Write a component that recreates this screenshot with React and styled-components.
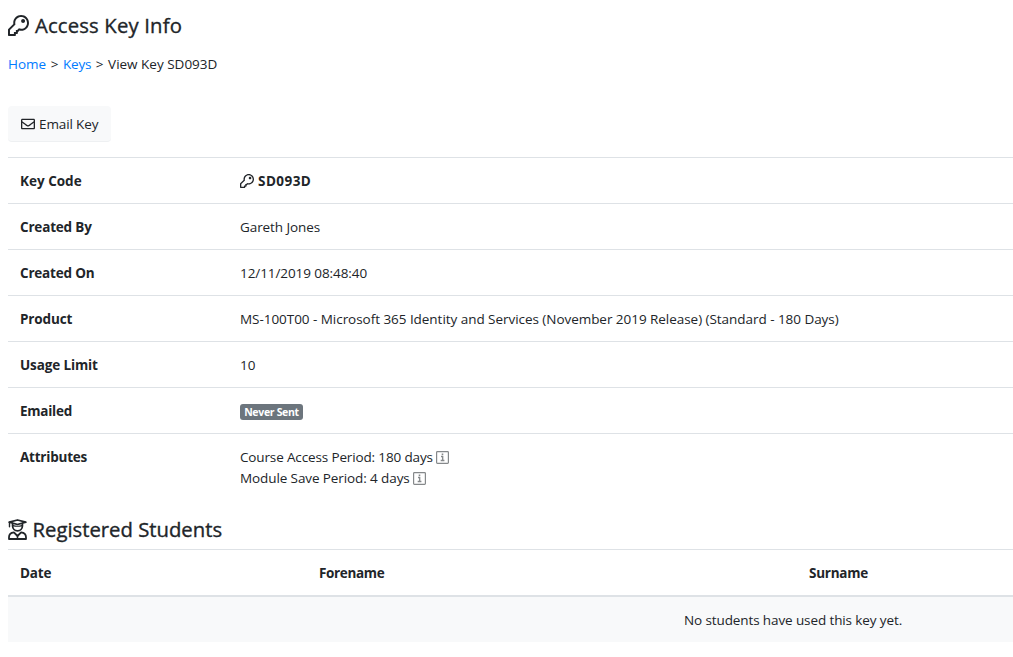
import React from "react";
import styled, { createGlobalStyle } from "styled-components";
import { FaRegEnvelope } from "react-icons/fa";

const GlobalStyle = createGlobalStyle`
  * { box-sizing: border-box; }
  body {
    margin: 0;
    background: #fff;
    color: #212529;
    font: 400 13.5px/21px "Open Sans", "Noto Sans", sans-serif;
    overflow: hidden;
  }
`;

const Page = styled.main`
  width: 1013px;
  height: 657px;
  padding: 13px 0 0 8px;
`;

const Text = styled.span`
  letter-spacing: ${(p) => p.$track || 0}px;
  white-space: nowrap;
`;

const Heading = styled.h1`
  display: flex;
  align-items: center;
  gap: ${(p) => p.$gap}px;
  height: 25px;
  margin: ${(p) => p.$top}px 0 0;
  font-size: 20.3px;
  font-weight: 500;
  line-height: 25px;
  -webkit-text-stroke: 0.35px currentColor;
`;

const Breadcrumb = styled.nav`
  display: flex;
  gap: 4.5px;
  margin-top: 16px;
`;

const Crumb = styled.a`
  color: #007bff;
  text-decoration: none;
`;

const EmailButton = styled.button`
  display: flex;
  align-items: center;
  gap: 4px;
  width: 103px;
  height: 36px;
  margin: 31px 0 15px;
  padding: 1px 12px 0 13px;
  border: 0;
  border-bottom: 1px solid #eef0f2;
  border-radius: 4px;
  background: #f8f9fa;
  color: #212529;
  font: inherit;
`;

const Details = styled.dl`
  margin: 0;
`;

const DetailRow = styled.div`
  display: grid;
  grid-template-columns: 220px 1fr;
  border-top: 1px solid #dee2e6;
  padding: 13px 12px 11px;
`;

const Label = styled.dt`
  font-weight: 700;
`;

const Value = styled.dd`
  margin: 0;
  font-weight: ${(p) => (p.$strong ? 700 : 400)};
`;

const Line = styled.div`
  display: flex;
  align-items: center;
  gap: ${(p) => p.$gap || 4}px;
  height: 21px;

  > svg {
    margin-bottom: 1px;
  }
`;

const Badge = styled.span`
  display: flex;
  align-items: center;
  justify-content: center;
  width: 63px;
  height: 16px;
  margin-top: 1px;
  border-radius: 3px;
  background: #6c757d;
  color: #fff;
  font-size: 10.5px;
  font-weight: 700;
  line-height: 16px;
`;

const Table = styled.section`
  margin-top: 7px;
  border-top: 1px solid #dee2e6;
`;

const TableHead = styled.div`
  display: grid;
  grid-template-columns: 299px 490px 1fr;
  height: 47px;
  padding: 13px 12px 0;
  border-bottom: 2px solid #dee2e6;
  font-weight: 700;
`;

const EmptyRow = styled.div`
  height: 45px;
  padding: 13px 0 0 676px;
  background: #f8f9fa;
`;

const KeyIcon = ({ size }) => (
  <svg width={size} height={size} viewBox="0 0 512 512" fill="currentColor" stroke="none">
    <path d="M320 48c79.529 0 144 64.471 144 144s-64.471 144-144 144c-18.968 0-37.076-3.675-53.66-10.339L224 368h-32v48h-48v48H48v-96l134.177-134.177A143.96 143.96 0 0 1 176 192c0-79.529 64.471-144 144-144m0-48C213.965 0 128 85.954 128 192c0 8.832.602 17.623 1.799 26.318L7.029 341.088A24.005 24.005 0 0 0 0 358.059V488c0 13.255 10.745 24 24 24h144c13.255 0 24-10.745 24-24v-24h24c13.255 0 24-10.745 24-24v-20l40.049-40.167C293.106 382.604 306.461 384 320 384c106.035 0 192-85.954 192-192C512 85.965 426.046 0 320 0zm0 144c0 26.51 21.49 48 48 48s48-21.49 48-48-21.49-48-48-48-48 21.49-48 48z" />
  </svg>
);

const StudentIcon = () => (
  <svg width="19" height="21" viewBox="0 0 19 21" fill="none" stroke="currentColor" strokeWidth="1.8" strokeLinejoin="round" strokeLinecap="round">
    <path d="M1.2 3.2 9.5 1l8.3 2.2-8.3 2.3z" />
    <path d="M1.5 3.5v4.2" strokeWidth="1.4" />
    <path d="M4.6 4.8V7a4.9 4.9 0 0 0 9.8 0V4.8" />
    <path d="M4.9 6.6c3 .9 6.2.9 9.2 0" strokeWidth="1.1" />
    <path d="M5.9 13.3C3 13.6 1 15.6 1 18.2V20h17v-1.8c0-2.6-2-4.6-4.9-4.9L9.5 17z" />
    <path d="M9.5 17v3" strokeWidth="1.5" />
  </svg>
);

const InfoIcon = () => (
  <svg width="13" height="13" viewBox="0 0 13 13" fill="none" stroke="#85888a">
    <rect x="0.6" y="0.6" width="11.8" height="11.8" rx="0.8" strokeWidth="1.2" />
    <path d="M5 5.5h1.7v4M4.7 9.5h3.7" strokeWidth="1.3" />
    <path d="M5.7 3.3h1.6" strokeWidth="1.6" />
  </svg>
);

const details = [
  ["Created By", "Gareth Jones", -0.18, -0.08],
  ["Created On", "12/11/2019 08:48:40", -0.2, -0.08],
  ["Product", "MS-100T00 - Microsoft 365 Identity and Services (November 2019 Release) (Standard - 180 Days)", -0.14, -0.043],
  ["Usage Limit", "10", -0.12, 0],
];

export default function App() {
  return (
    <Page>
      <GlobalStyle />
      <Heading $top={0} $gap={6}>
        <KeyIcon size={21} />
        <Text $track={0.16}>Access Key Info</Text>
      </Heading>
      <Breadcrumb>
        <Crumb href="#"><Text>Home</Text></Crumb>
        <Text>&gt;</Text>
        <Crumb href="#"><Text $track={-0.15}>Keys</Text></Crumb>
        <Text>&gt;</Text>
        <Text $track={0}>View Key SD093D</Text>
      </Breadcrumb>
      <EmailButton>
        <FaRegEnvelope size={14} />
        <Text $track={-0.12}>Email Key</Text>
      </EmailButton>
      <Details>
        <DetailRow>
          <Label><Text>Key Code</Text></Label>
          <Value $strong><Line><KeyIcon size={14} /><Text $track={0.45}>SD093D</Text></Line></Value>
        </DetailRow>
        {details.map(([label, value, labelTrack, valueTrack]) => (
          <DetailRow key={label}>
            <Label><Text $track={labelTrack}>{label}</Text></Label>
            <Value><Text $track={valueTrack}>{value}</Text></Value>
          </DetailRow>
        ))}
        <DetailRow>
          <Label><Text $track={-0.25}>Emailed</Text></Label>
          <Value><Line><Badge><Text $track={-0.32}>Never Sent</Text></Badge></Line></Value>
        </DetailRow>
        <DetailRow>
          <Label><Text $track={-0.22}>Attributes</Text></Label>
          <Value>
            <Line $gap={3}><Text $track={-0.14}>Course Access Period: 180 days</Text><InfoIcon /></Line>
            <Line $gap={3}><Text $track={-0.1}>Module Save Period: 4 days</Text><InfoIcon /></Line>
          </Value>
        </DetailRow>
      </Details>
      <Heading as="h2" $top={17} $gap={5.5}>
        <StudentIcon />
        <Text>Registered Students</Text>
      </Heading>
      <Table>
        <TableHead>
          <Text $track={-0.15}>Date</Text>
          <Text $track={-0.35}>Forename</Text>
          <Text $track={-0.25}>Surname</Text>
        </TableHead>
        <EmptyRow><Text $track={-0.11}>No students have used this key yet.</Text></EmptyRow>
      </Table>
    </Page>
  );
}
